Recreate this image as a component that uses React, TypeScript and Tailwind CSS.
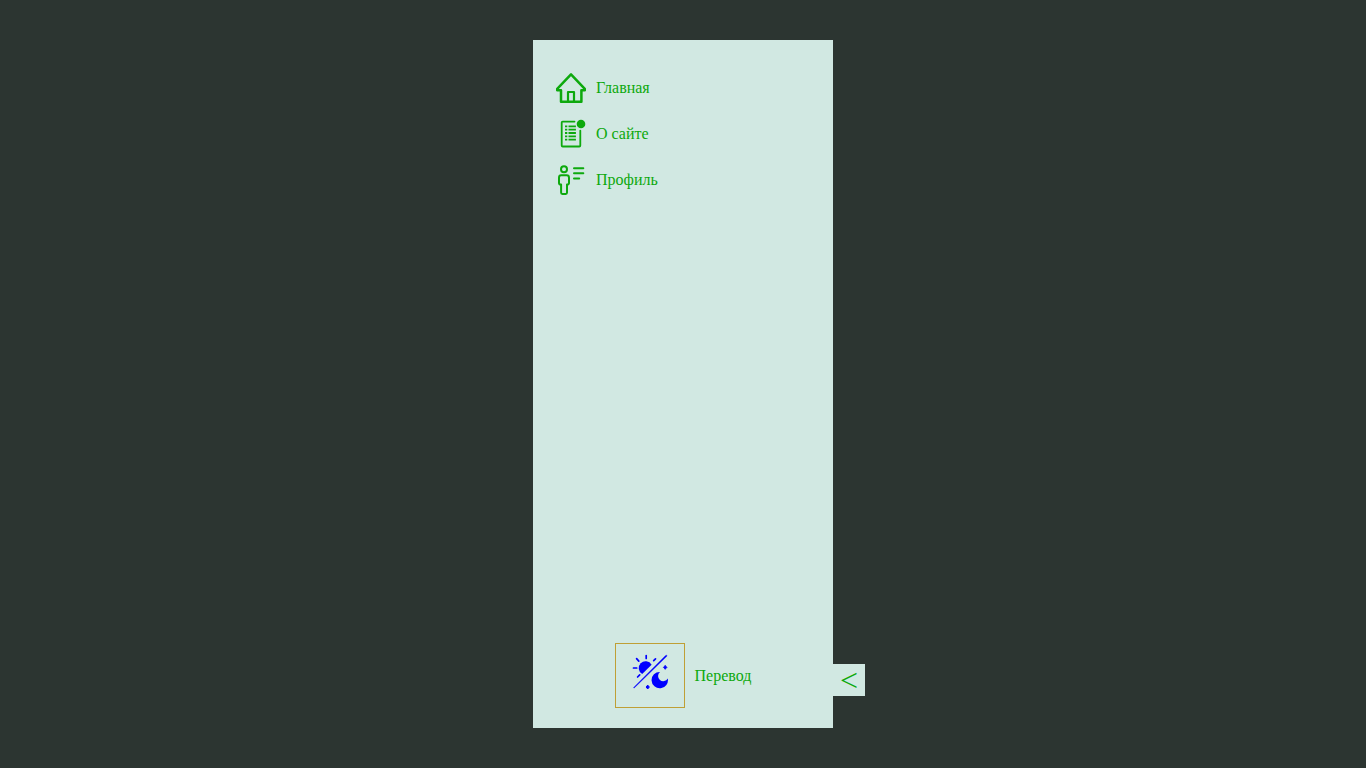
import { useState } from "react";
import type { ReactNode } from "react";

function HomeIcon() {
  return (
    <svg className="size-[30px]" viewBox="0 0 30 30" fill="none" stroke="currentColor" strokeWidth="2.5" strokeLinejoin="round" aria-hidden="true">
      <path d="M15 1.4 1.2 15.8v1.5H5v11.4h20.4V17.3h3.4v-1.5Z" />
      <path d="M12 28.8V19h6v9.8" strokeWidth="2.2" />
    </svg>
  );
}

function AboutIcon() {
  return (
    <svg className="size-[30px]" viewBox="0 0 30 30" fill="none" stroke="currentColor" strokeWidth="1.8" strokeLinecap="round" strokeLinejoin="round" aria-hidden="true">
      <path d="M18.500 2.600H6.700q-1 0-1 1v22.900q0 1 1 1h16.600q1 0 1-1V11.600" />
      <path d="M9 7.400h2.300M9 10.700h2.300M9 14h2.300M9 17.300h2.300M9 20.600h2.300M12.500 7.400h7.400M12.500 10.700h7.400M12.500 14h7.400M12.500 17.300h7.400M12.500 20.600h7.400" strokeLinecap="butt" />
      <circle cx="25" cy="5" r="4.300" fill="currentColor" stroke="none" />
    </svg>
  );
}

function ProfileIcon() {
  return (
    <svg className="size-[30px]" viewBox="0 0 30 30" fill="none" stroke="currentColor" strokeWidth="2" strokeLinecap="round" strokeLinejoin="round" aria-hidden="true">
      <circle cx="8" cy="4.200" r="3" />
      <path d="M5.200 10.300h5.400q2.400 0 2.400 2.400v5.200q0 1.500-2 1.600v8q0 1.400-1.200 1.400H6.300q-1.200 0-1.200-1.400v-8Q3 19.400 3 17.900v-5.200q0-2.400 2.200-2.400Z" />
      <path d="M18 3.200h9.300M18 8.300h9.300M18 13.400h5.200" />
    </svg>
  );
}

function DayNightIcon() {
  return (
    <svg className="size-9" viewBox="0 0 36 36" fill="currentColor" aria-hidden="true">
      <path d="M19.600 10.700A6.900 6.900 0 1 0 10.200 20.100Z" />
      <path d="M28 17.900A8.200 8.200 0 1 0 35.800 24.500A5.200 5.200 0 1 1 28 17.900Z" />
      <path d="M34.700 1.200Q35.300 1.800 34.500 2.600L2.200 34Q1.600 34.300 1.700 33.500L33.600 1.600Q34.200 1 34.700 1.200Z" stroke="currentColor" strokeWidth=".400" />
      <path d="M14.200 1.500v3M4.600 4.600l2.200 2.500M1.500 14h3.200M23.500 4.900l-1.800 1.800M7.700 20.900l-2.100 2.100" stroke="currentColor" strokeWidth="1.700" strokeLinecap="round" fill="none" />
      <path d="M33.200 11.400q.700 1 1.700 1.900-1 1-1.700 2-.700-1-1.700-2 1-.900 1.700-1.900ZM15.700 31.100q.700 1 1.700 1.900-1 1-1.700 2-.700-1-1.700-2 1-.900 1.700-1.900Z" stroke="currentColor" strokeWidth="1" strokeLinejoin="round" />
    </svg>
  );
}

function NavItem({ href, icon, children }: { href: string; icon: ReactNode; children: ReactNode }) {
  return (
    <li>
      <a href={href} className="flex items-center gap-[10px]">
        {icon}
        <span>{children}</span>
      </a>
    </li>
  );
}

export default function App() {
  const [collapsed, setCollapsed] = useState(false);

  return (
    <div className="flex min-h-screen justify-center bg-[#2c3531] py-10 font-['Liberation_Serif',serif] text-base leading-5 text-[#0da90d]">
      <aside className={`relative flex flex-col justify-between bg-[#d1e8e2] ${collapsed ? "w-20" : "w-[300px]"}`}>
        <nav className="overflow-hidden px-[23px] pt-[33px]">
          <ul className="flex flex-col gap-4">
            <NavItem href="#main" icon={<HomeIcon />}>Главная</NavItem>
            <NavItem href="#about" icon={<AboutIcon />}>О сайте</NavItem>
            <NavItem href="#profile" icon={<ProfileIcon />}>Профиль</NavItem>
          </ul>
        </nav>
        <div className="flex items-center justify-center gap-[10px] overflow-hidden pb-5">
          <button type="button" aria-label="Тема" className="border border-[#bf9f35] px-4 pt-[10px] pb-[17px] text-[#0000ff]">
            <DayNightIcon />
          </button>
          <button type="button">Перевод</button>
        </div>
        <button
          type="button"
          onClick={() => setCollapsed(!collapsed)}
          className="absolute bottom-8 left-full flex size-8 items-center justify-center bg-[#d1e8e2] text-[32px] leading-8"
        >
          {collapsed ? ">" : "<"}
        </button>
      </aside>
    </div>
  );
}
